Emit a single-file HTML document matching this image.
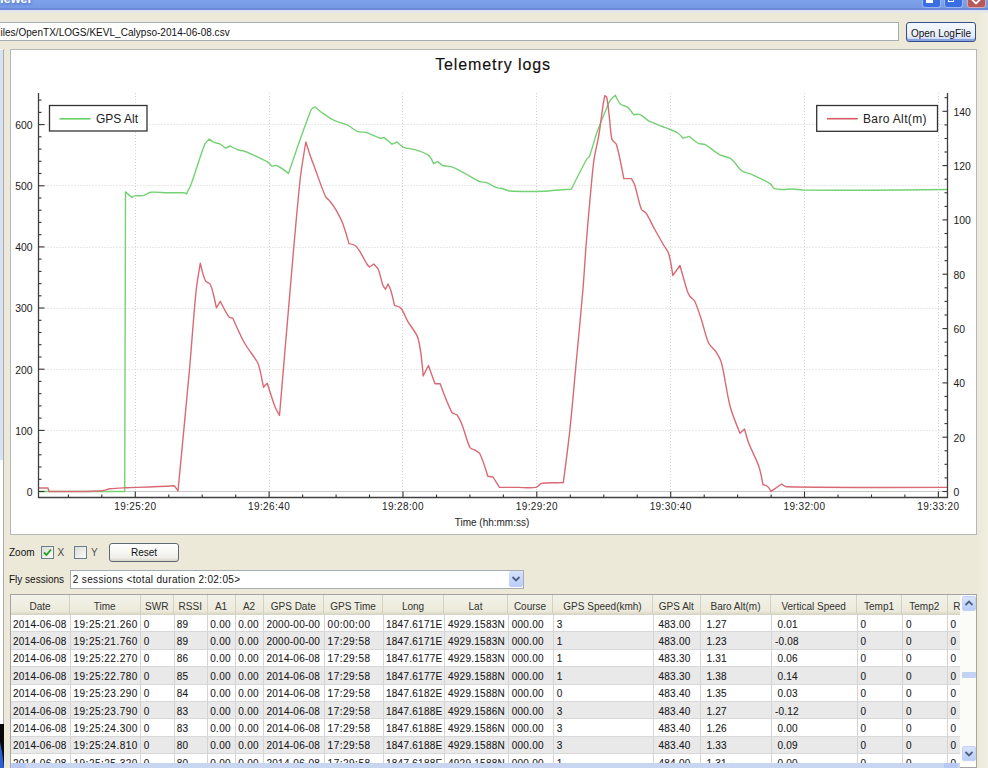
<!DOCTYPE html>
<html><head><meta charset="utf-8"><style>
*{margin:0;padding:0;box-sizing:border-box}
html,body{width:988px;height:768px;overflow:hidden;background:#ece9d8;font-family:"Liberation Sans",sans-serif;color:#111}
svg text{font-family:"Liberation Sans",sans-serif}
.abs{position:absolute}
#title{left:0;top:0;width:988px;height:10px;background:linear-gradient(#7ea2ea,#7497e3);}
#titleline{left:0;top:8px;width:988px;height:2px;background:#6b88d6}
#titlelite{left:0;top:10px;width:988px;height:3px;background:linear-gradient(#dfe3f4,#e9e8e6)}
#path{left:-3px;top:22px;width:902px;height:19px;background:#fff;border:1px solid #a5acb2;font-size:10px;line-height:17px;padding-top:1.2px;padding-left:2.5px;letter-spacing:0.03px;white-space:nowrap}
#openbtn{left:906px;top:22px;width:70px;height:20px;border:1.3px solid #34508c;border-radius:3px;background:linear-gradient(#f4f7ff,#e9eefb 70%,#c3d0f2);font-size:10px;line-height:18px;padding-top:1.5px;text-align:center;box-shadow:inset 0 -2px 0 #8aa2e0}
#chartp{left:10px;top:49px;width:967px;height:486px;background:#fff;border:1px solid #b4b8bd}
#leftstrip{left:-1px;top:49px;width:5px;height:676px;background:#fff;border-right:1px solid #a8adb3}
#leftblue{left:0;top:50px;width:3px;height:410px;background:#d9e2f2}
#blk{left:0;top:724px;width:4px;height:44px;background:#080808}
#zoomlbl{left:9px;top:546px;font-size:10px;line-height:14px}
.cb{position:absolute;width:13px;height:13px;border:1.3px solid #6a7e92;background:linear-gradient(135deg,#dcdcd7,#fbfbf8)}
#reset{left:109px;top:542.5px;width:70px;height:19.5px;border:1.3px solid #5d6a76;border-radius:3px;background:linear-gradient(#fff,#f0f0ea 80%,#d8d4c6);font-size:10px;line-height:17px;text-align:center}
#flylbl{left:9px;top:573px;font-size:10px;line-height:14px}
#combo{left:69.8px;top:569.5px;width:454px;height:19px;background:#fff;border:1px solid #a5acb2;font-size:10px;line-height:17px;padding-left:2px;letter-spacing:0.34px;white-space:nowrap}
#combobtn{left:509px;top:571px;width:14px;height:16px;background:linear-gradient(#d6e2fb,#b8cdf8);border-radius:2px}
#table{left:10px;top:594px;width:967px;height:174px;background:#fff;border:1px solid #a4a4a4}
.hd{position:absolute;top:595px;height:20px;padding-top:3.2px;background:linear-gradient(#f3f2ea,#ebeadb 80%,#d6d2c2);border-right:1px solid #d6d2c2;font-size:10px;line-height:18px;text-align:center;color:#333;white-space:nowrap;overflow:hidden}
.row{position:absolute;left:11px;width:949px;height:17.4px}
.cell{position:absolute;height:17.4px;font-size:10px;line-height:17.4px;padding-top:0.7px;white-space:nowrap;overflow:hidden;color:#1a1a1a;letter-spacing:0.25px;-webkit-text-stroke:0.1px #1a1a1a}
.vl{position:absolute;top:614px;width:1px;height:150px;background:#d4d4d4}
.hl{position:absolute;left:11px;width:949px;height:1px;background:#d8d8d8}
#vscroll{left:960px;top:595px;width:16px;height:168px;background:#fbfbf8}
.sbtn{position:absolute;width:14px;height:15px;background:linear-gradient(#d9e4fb,#b9cdf6);border-radius:2px;border:1px solid #c3d3f5}
#hscroll{left:11px;top:763px;width:949px;height:5px;background:#c9d6f2}
#rightstrip{left:977px;top:13px;width:11px;height:757px;background:linear-gradient(90deg,#ece9d8,#f1efe4)}
</style></head><body>
<div class="abs" id="title"></div>
<div class="abs" id="titleline"></div>
<div class="abs" id="titlelite"></div>
<div class="abs" style="left:0;top:-8px;font-size:13px;font-weight:bold;color:#fff;line-height:13px;letter-spacing:-0.2px;text-shadow:1px 2px 2px #5b7fd6">iewer</div>
<div class="abs" style="left:922px;top:0;width:19px;height:7.5px;background:#3b6ee0;border:1px solid #9bb6f0;border-top:none;border-radius:0 0 3px 3px"></div>
<div class="abs" style="left:926px;top:0;width:7px;height:3px;background:#fff"></div>
<div class="abs" style="left:944px;top:0;width:19px;height:7.5px;background:#3b6ee0;border:1px solid #9bb6f0;border-top:none;border-radius:0 0 3px 3px"></div>
<div class="abs" style="left:948px;top:-2px;width:6px;height:4px;border:1px solid #fff;border-top:none"></div>
<div class="abs" style="left:966.5px;top:0;width:19px;height:7.5px;background:#b9585a;border:1px solid #d9a7b0;border-top:none;border-radius:0 0 3px 3px"></div>
<svg class="abs" style="left:966px;top:0" width="20" height="8"><path d="M4 -2.5 L10 3.5 L16 -2.5" stroke="#fff" stroke-width="1.8" fill="none"/></svg>
<div class="abs" id="path">iles/OpenTX/LOGS/KEVL_Calypso-2014-06-08.csv</div>
<div class="abs" id="openbtn">Open LogFile</div>
<div class="abs" id="leftstrip"></div>
<div class="abs" id="leftblue"></div>
<div class="abs" id="blk"></div>
<svg class="abs" style="left:0;top:724px" width="4" height="44"><path d="M0 18 Q3 30 4 44 L0 44 Z" fill="#2c5fd0"/></svg>
<div class="abs" id="chartp"></div>
<svg width="988" height="768" style="position:absolute;left:0;top:0">
<line x1="135.5" y1="93" x2="135.5" y2="497.5" stroke="#d2d2d2" stroke-width="1" stroke-dasharray="1 2"/>
<line x1="269.5" y1="93" x2="269.5" y2="497.5" stroke="#d2d2d2" stroke-width="1" stroke-dasharray="1 2"/>
<line x1="402.5" y1="93" x2="402.5" y2="497.5" stroke="#d2d2d2" stroke-width="1" stroke-dasharray="1 2"/>
<line x1="536.5" y1="93" x2="536.5" y2="497.5" stroke="#d2d2d2" stroke-width="1" stroke-dasharray="1 2"/>
<line x1="670.5" y1="93" x2="670.5" y2="497.5" stroke="#d2d2d2" stroke-width="1" stroke-dasharray="1 2"/>
<line x1="804.5" y1="93" x2="804.5" y2="497.5" stroke="#d2d2d2" stroke-width="1" stroke-dasharray="1 2"/>
<line x1="938.5" y1="93" x2="938.5" y2="497.5" stroke="#d2d2d2" stroke-width="1" stroke-dasharray="1 2"/>
<line x1="38.5" y1="430.5" x2="947.5" y2="430.5" stroke="#d2d2d2" stroke-width="1" stroke-dasharray="1 2"/>
<line x1="38.5" y1="369.5" x2="947.5" y2="369.5" stroke="#d2d2d2" stroke-width="1" stroke-dasharray="1 2"/>
<line x1="38.5" y1="308.5" x2="947.5" y2="308.5" stroke="#d2d2d2" stroke-width="1" stroke-dasharray="1 2"/>
<line x1="38.5" y1="247.5" x2="947.5" y2="247.5" stroke="#d2d2d2" stroke-width="1" stroke-dasharray="1 2"/>
<line x1="38.5" y1="185.5" x2="947.5" y2="185.5" stroke="#d2d2d2" stroke-width="1" stroke-dasharray="1 2"/>
<line x1="38.5" y1="124.5" x2="947.5" y2="124.5" stroke="#d2d2d2" stroke-width="1" stroke-dasharray="1 2"/>
<line x1="38.5" y1="491.5" x2="947.5" y2="491.5" stroke="#c8c8c8" stroke-width="1"/>
<path d="M38.0 491.5 C38.0 491.5 124.7 491.5 124.7 491.5 C124.7 491.5 125.5 191.9 125.5 191.9 C125.5 191.9 131.8 197.4 131.8 197.4 C131.8 197.4 133.7 196.1 134.6 195.9 C137.0 195.5 140.4 196.1 142.8 195.6 C145.4 195.0 148.4 192.6 151.0 192.3 C155.9 191.7 162.5 192.7 167.4 192.8 C172.3 192.9 178.9 192.6 183.8 192.8 C184.7 192.8 186.5 193.8 186.5 193.8 C186.5 193.8 189.9 187.5 191.0 184.6 C195.4 172.7 200.0 156.4 204.7 144.6 C205.5 142.6 209.2 139.1 209.2 139.1 C209.2 139.1 212.9 141.9 214.7 142.7 C216.0 143.3 218.0 143.1 219.3 143.7 C221.4 144.7 225.6 148.2 225.6 148.2 C225.6 148.2 230.2 146.0 230.2 146.0 C230.2 146.0 235.8 149.1 238.4 150.0 C239.9 150.6 242.3 150.4 243.8 151.0 C248.3 152.6 254.1 155.3 258.4 157.3 C261.2 158.6 265.0 160.2 267.5 161.9 C269.1 163.0 272.0 166.4 272.0 166.4 C272.0 166.4 275.3 165.0 276.6 165.5 C280.5 167.2 288.5 173.4 288.5 173.4 C288.5 173.4 303.7 128.4 311.2 109.5 C311.8 108.2 315.2 106.9 315.2 106.9 C315.2 106.9 320.5 111.6 323.0 113.4 C326.4 115.8 331.0 118.9 334.7 120.7 C338.4 122.5 344.0 123.4 347.7 125.2 C351.0 126.8 354.6 130.4 358.0 131.7 C360.2 132.6 363.7 131.7 366.0 132.4 C370.4 133.7 375.8 137.0 380.3 138.2 C381.4 138.5 384.0 137.4 384.0 137.4 C384.0 137.4 392.0 144.2 392.0 144.2 C392.0 144.2 397.2 142.0 397.2 142.0 C397.2 142.0 401.4 146.3 403.7 147.3 C406.6 148.6 411.0 148.5 414.0 149.4 C418.4 150.8 424.6 152.4 428.4 155.1 C430.8 156.9 433.6 163.7 433.6 163.7 C433.6 163.7 437.6 161.6 437.6 161.6 C437.6 161.6 441.0 164.8 442.8 165.5 C445.4 166.4 449.3 165.9 451.9 166.8 C456.0 168.3 461.1 171.3 464.9 173.3 C469.5 175.7 475.2 179.6 479.9 181.7 C481.5 182.4 484.1 181.8 485.8 182.4 C489.5 183.7 493.9 186.5 497.6 187.9 C498.7 188.3 500.4 188.0 501.6 188.3 C504.0 188.9 507.0 190.8 509.5 191.0 C519.7 191.7 533.4 191.5 543.7 191.3 C546.9 191.3 551.1 190.5 554.3 190.3 C559.4 189.9 571.3 189.2 571.3 189.2 C571.3 189.2 581.9 167.9 586.8 159.0 C587.3 158.0 589.0 157.4 589.4 156.4 C592.2 149.1 594.6 139.0 597.2 131.7 C599.3 125.7 602.6 117.9 605.0 112.1 C606.5 108.6 608.2 103.7 610.2 100.4 C611.4 98.5 615.4 95.2 615.4 95.2 C615.4 95.2 618.4 102.1 620.6 104.3 C622.1 105.8 625.5 105.6 627.1 106.9 C629.5 108.8 633.6 114.7 633.6 114.7 C633.6 114.7 638.4 113.9 640.2 114.7 C643.3 116.0 646.3 119.7 649.3 121.2 C653.0 123.2 658.4 124.9 662.3 126.5 C664.6 127.4 667.7 128.5 670.0 129.5 C672.4 130.5 675.7 131.6 677.8 133.0 C679.6 134.2 683.0 138.2 683.0 138.2 C683.0 138.2 689.5 136.4 689.5 136.4 C689.5 136.4 695.6 141.8 698.6 143.4 C700.4 144.3 703.4 143.7 705.2 144.7 C709.8 147.2 714.9 152.1 719.5 154.6 C722.4 156.2 726.9 156.7 729.9 158.2 C731.3 158.9 732.7 160.5 733.8 161.6 C736.3 164.2 738.7 168.6 741.6 170.7 C744.3 172.6 749.0 173.2 752.0 174.6 C757.6 177.1 765.1 180.5 770.3 183.8 C771.8 184.7 772.6 187.6 774.2 188.4 C776.3 189.4 779.6 189.4 782.0 189.5 C785.1 189.6 789.3 188.9 792.4 189.0 C795.5 189.1 799.7 189.9 802.8 190.0 C823.0 190.3 849.8 190.4 870.0 190.3 C893.1 190.2 947.0 189.5 947.0 189.5" fill="none" stroke="#74d274" stroke-width="1.4" stroke-linejoin="round"/>
<path d="M38.0 488.0 C38.0 488.0 48.0 488.0 48.0 488.0 C48.0 488.0 49.0 491.5 49.0 491.5 C49.0 491.5 84.7 491.7 100.0 491.0 C103.2 490.9 107.2 489.2 110.4 488.8 C114.8 488.2 120.6 488.0 125.0 487.8 C132.3 487.5 142.2 487.3 149.5 487.0 C156.9 486.7 174.2 485.7 174.2 485.7 C174.2 485.7 178.0 490.9 178.0 490.9 C178.0 490.9 186.1 406.6 189.4 370.5 C191.5 347.0 193.6 315.5 196.0 292.0 C196.9 283.3 200.3 263.2 200.3 263.2 C200.3 263.2 203.1 276.0 205.5 281.0 C206.2 282.5 209.2 282.6 210.0 284.0 C211.6 286.7 212.5 290.9 213.3 294.0 C214.4 298.1 216.4 307.8 216.4 307.8 C216.4 307.8 220.3 301.3 220.3 301.3 C220.3 301.3 225.7 312.6 228.9 316.9 C229.6 317.9 232.8 318.2 232.8 318.2 C232.8 318.2 240.5 335.8 244.5 343.0 C247.9 349.1 254.1 356.4 257.6 362.5 C258.8 364.6 259.4 367.9 260.0 370.3 C261.2 375.3 263.5 387.2 263.5 387.2 C263.5 387.2 267.2 383.3 267.2 383.3 C267.2 383.3 269.6 390.6 270.6 393.8 C271.9 397.7 273.4 403.0 275.0 406.8 C276.1 409.5 279.5 415.4 279.5 415.4 C279.5 415.4 285.8 340.2 288.6 308.0 C291.9 269.8 296.0 218.8 300.0 180.7 C301.2 169.0 305.9 142.0 305.9 142.0 C305.9 142.0 308.7 151.1 310.0 155.0 C311.1 158.2 312.7 162.4 313.9 165.5 C317.4 174.9 321.5 187.6 325.6 196.8 C326.3 198.3 328.5 199.4 329.5 200.7 C331.6 203.3 334.3 206.9 336.0 209.8 C338.2 213.6 340.9 218.7 342.5 222.8 C344.8 228.9 349.0 243.6 349.0 243.6 C349.0 243.6 353.9 244.4 355.5 245.7 C357.6 247.3 359.3 250.6 360.7 252.8 C362.8 256.2 365.0 261.1 367.2 264.5 C367.8 265.4 369.8 267.0 369.8 267.0 C369.8 267.0 373.8 264.0 373.8 264.0 C373.8 264.0 377.5 267.7 378.4 269.7 C380.3 274.2 381.2 280.7 382.9 285.3 C383.4 286.6 385.5 289.2 385.5 289.2 C385.5 289.2 388.0 284.0 388.0 284.0 C388.0 284.0 390.1 288.1 390.7 290.0 C392.1 294.6 394.6 305.6 394.6 305.6 C394.6 305.6 399.7 306.6 401.0 308.2 C403.8 311.6 405.4 317.4 407.6 321.2 C410.5 326.4 416.4 332.5 418.0 338.2 C421.1 349.2 423.2 376.0 423.2 376.0 C423.2 376.0 428.4 365.5 428.4 365.5 C428.4 365.5 435.0 383.8 435.0 383.8 C435.0 383.8 440.2 383.8 440.2 383.8 C440.2 383.8 447.5 404.2 451.9 412.4 C452.7 413.9 455.9 413.7 457.0 415.0 C459.2 417.7 461.0 422.1 462.3 425.4 C464.9 431.9 466.7 441.3 470.0 447.5 C470.8 449.1 473.8 449.2 475.3 450.2 C476.8 451.2 479.2 452.4 480.0 454.0 C483.1 460.4 487.8 476.2 487.8 476.2 C487.8 476.2 493.0 477.0 493.0 477.0 C493.0 477.0 499.5 487.4 499.5 487.4 C499.5 487.4 512.5 487.4 518.0 487.4 C523.4 487.4 530.7 488.3 536.0 487.4 C537.9 487.1 539.3 483.9 541.2 483.5 C546.2 482.4 553.0 482.9 558.1 482.7 C559.7 482.6 563.3 482.7 563.3 482.7 C563.3 482.7 568.1 446.3 569.8 430.6 C572.1 409.5 574.4 381.4 576.4 360.3 C578.4 339.2 581.1 311.1 582.9 290.0 C584.0 276.9 585.0 259.4 586.0 246.2 C587.1 232.2 588.7 213.4 590.0 199.4 C591.1 187.7 592.3 172.0 593.9 160.3 C595.0 152.4 597.7 142.1 599.0 134.3 C600.4 125.7 601.7 114.2 603.0 105.6 C603.4 102.6 604.8 95.7 604.8 95.7 C604.8 95.7 606.7 96.9 606.9 97.8 C608.2 104.0 608.7 112.4 609.5 118.6 C610.3 124.9 610.4 133.4 612.0 139.5 C612.5 141.4 615.8 142.6 616.4 144.5 C619.4 154.5 623.8 178.6 623.8 178.6 C623.8 178.6 631.5 178.6 631.5 178.6 C631.5 178.6 634.1 183.1 634.8 185.2 C637.1 192.4 638.7 202.5 641.5 209.5 C642.1 211.0 645.0 211.5 645.9 212.9 C649.0 217.6 652.1 224.6 654.8 229.5 C657.4 234.2 660.9 240.4 663.6 245.0 C665.1 247.7 667.9 251.0 668.8 254.0 C670.7 260.3 672.8 275.5 672.8 275.5 C672.8 275.5 680.0 265.5 680.0 265.5 C680.0 265.5 684.9 283.4 687.3 291.0 C687.9 292.7 688.9 295.0 690.0 296.5 C691.1 298.1 693.8 299.3 694.6 301.0 C697.3 306.4 699.6 314.2 701.5 320.0 C703.8 326.9 705.6 336.4 708.6 343.0 C710.0 346.1 714.0 348.8 715.8 351.6 C717.9 354.8 720.5 359.3 721.5 363.0 C724.8 375.7 726.7 393.3 730.0 406.0 C732.2 414.4 740.0 433.3 740.0 433.3 C740.0 433.3 744.5 429.0 744.5 429.0 C744.5 429.0 747.2 439.1 748.8 443.3 C751.5 450.3 756.4 459.2 758.8 466.3 C760.6 471.7 763.0 484.8 763.0 484.8 C763.0 484.8 766.3 485.3 767.4 486.2 C768.9 487.4 771.0 491.4 771.0 491.4 C771.0 491.4 781.7 484.0 781.7 484.0 C781.7 484.0 784.9 486.8 786.6 486.8 C834.7 487.8 947.0 487.4 947.0 487.4" fill="none" stroke="#d96a74" stroke-width="1.4" stroke-linejoin="round"/>
<path d="M38.5 93 V497.5 H947.5 V93" fill="none" stroke="#404040" stroke-width="1.3"/>
<line x1="38.5" y1="491.5" x2="44.5" y2="491.5" stroke="#333" stroke-width="1.1"/>
<text x="32.5" y="495.9" text-anchor="end" font-size="10.4" fill="#1a1a1a">0</text>
<line x1="38.5" y1="479.3" x2="41.5" y2="479.3" stroke="#333" stroke-width="1.1"/>
<line x1="38.5" y1="467.0" x2="41.5" y2="467.0" stroke="#333" stroke-width="1.1"/>
<line x1="38.5" y1="454.8" x2="41.5" y2="454.8" stroke="#333" stroke-width="1.1"/>
<line x1="38.5" y1="442.6" x2="41.5" y2="442.6" stroke="#333" stroke-width="1.1"/>
<line x1="38.5" y1="430.4" x2="44.5" y2="430.4" stroke="#333" stroke-width="1.1"/>
<text x="32.5" y="434.8" text-anchor="end" font-size="10.4" fill="#1a1a1a">100</text>
<line x1="38.5" y1="418.1" x2="41.5" y2="418.1" stroke="#333" stroke-width="1.1"/>
<line x1="38.5" y1="405.9" x2="41.5" y2="405.9" stroke="#333" stroke-width="1.1"/>
<line x1="38.5" y1="393.7" x2="41.5" y2="393.7" stroke="#333" stroke-width="1.1"/>
<line x1="38.5" y1="381.4" x2="41.5" y2="381.4" stroke="#333" stroke-width="1.1"/>
<line x1="38.5" y1="369.2" x2="44.5" y2="369.2" stroke="#333" stroke-width="1.1"/>
<text x="32.5" y="373.6" text-anchor="end" font-size="10.4" fill="#1a1a1a">200</text>
<line x1="38.5" y1="357.0" x2="41.5" y2="357.0" stroke="#333" stroke-width="1.1"/>
<line x1="38.5" y1="344.7" x2="41.5" y2="344.7" stroke="#333" stroke-width="1.1"/>
<line x1="38.5" y1="332.5" x2="41.5" y2="332.5" stroke="#333" stroke-width="1.1"/>
<line x1="38.5" y1="320.3" x2="41.5" y2="320.3" stroke="#333" stroke-width="1.1"/>
<line x1="38.5" y1="308.0" x2="44.5" y2="308.0" stroke="#333" stroke-width="1.1"/>
<text x="32.5" y="312.4" text-anchor="end" font-size="10.4" fill="#1a1a1a">300</text>
<line x1="38.5" y1="295.8" x2="41.5" y2="295.8" stroke="#333" stroke-width="1.1"/>
<line x1="38.5" y1="283.6" x2="41.5" y2="283.6" stroke="#333" stroke-width="1.1"/>
<line x1="38.5" y1="271.4" x2="41.5" y2="271.4" stroke="#333" stroke-width="1.1"/>
<line x1="38.5" y1="259.1" x2="41.5" y2="259.1" stroke="#333" stroke-width="1.1"/>
<line x1="38.5" y1="246.9" x2="44.5" y2="246.9" stroke="#333" stroke-width="1.1"/>
<text x="32.5" y="251.3" text-anchor="end" font-size="10.4" fill="#1a1a1a">400</text>
<line x1="38.5" y1="234.7" x2="41.5" y2="234.7" stroke="#333" stroke-width="1.1"/>
<line x1="38.5" y1="222.4" x2="41.5" y2="222.4" stroke="#333" stroke-width="1.1"/>
<line x1="38.5" y1="210.2" x2="41.5" y2="210.2" stroke="#333" stroke-width="1.1"/>
<line x1="38.5" y1="198.0" x2="41.5" y2="198.0" stroke="#333" stroke-width="1.1"/>
<line x1="38.5" y1="185.8" x2="44.5" y2="185.8" stroke="#333" stroke-width="1.1"/>
<text x="32.5" y="190.2" text-anchor="end" font-size="10.4" fill="#1a1a1a">500</text>
<line x1="38.5" y1="173.5" x2="41.5" y2="173.5" stroke="#333" stroke-width="1.1"/>
<line x1="38.5" y1="161.3" x2="41.5" y2="161.3" stroke="#333" stroke-width="1.1"/>
<line x1="38.5" y1="149.1" x2="41.5" y2="149.1" stroke="#333" stroke-width="1.1"/>
<line x1="38.5" y1="136.8" x2="41.5" y2="136.8" stroke="#333" stroke-width="1.1"/>
<line x1="38.5" y1="124.6" x2="44.5" y2="124.6" stroke="#333" stroke-width="1.1"/>
<text x="32.5" y="129.0" text-anchor="end" font-size="10.4" fill="#1a1a1a">600</text>
<line x1="38.5" y1="112.4" x2="41.5" y2="112.4" stroke="#333" stroke-width="1.1"/>
<line x1="38.5" y1="100.1" x2="41.5" y2="100.1" stroke="#333" stroke-width="1.1"/>
<line x1="942.5" y1="491.5" x2="947.5" y2="491.5" stroke="#333" stroke-width="1.1"/>
<text x="953.5" y="495.9" font-size="10.4" fill="#1a1a1a">0</text>
<line x1="944.5" y1="477.9" x2="947.5" y2="477.9" stroke="#333" stroke-width="1.1"/>
<line x1="944.5" y1="464.3" x2="947.5" y2="464.3" stroke="#333" stroke-width="1.1"/>
<line x1="944.5" y1="450.8" x2="947.5" y2="450.8" stroke="#333" stroke-width="1.1"/>
<line x1="942.5" y1="437.2" x2="947.5" y2="437.2" stroke="#333" stroke-width="1.1"/>
<text x="953.5" y="441.6" font-size="10.4" fill="#1a1a1a">20</text>
<line x1="944.5" y1="423.6" x2="947.5" y2="423.6" stroke="#333" stroke-width="1.1"/>
<line x1="944.5" y1="410.0" x2="947.5" y2="410.0" stroke="#333" stroke-width="1.1"/>
<line x1="944.5" y1="396.4" x2="947.5" y2="396.4" stroke="#333" stroke-width="1.1"/>
<line x1="942.5" y1="382.9" x2="947.5" y2="382.9" stroke="#333" stroke-width="1.1"/>
<text x="953.5" y="387.3" font-size="10.4" fill="#1a1a1a">40</text>
<line x1="944.5" y1="369.3" x2="947.5" y2="369.3" stroke="#333" stroke-width="1.1"/>
<line x1="944.5" y1="355.7" x2="947.5" y2="355.7" stroke="#333" stroke-width="1.1"/>
<line x1="944.5" y1="342.1" x2="947.5" y2="342.1" stroke="#333" stroke-width="1.1"/>
<line x1="942.5" y1="328.6" x2="947.5" y2="328.6" stroke="#333" stroke-width="1.1"/>
<text x="953.5" y="333.0" font-size="10.4" fill="#1a1a1a">60</text>
<line x1="944.5" y1="315.0" x2="947.5" y2="315.0" stroke="#333" stroke-width="1.1"/>
<line x1="944.5" y1="301.4" x2="947.5" y2="301.4" stroke="#333" stroke-width="1.1"/>
<line x1="944.5" y1="287.8" x2="947.5" y2="287.8" stroke="#333" stroke-width="1.1"/>
<line x1="942.5" y1="274.2" x2="947.5" y2="274.2" stroke="#333" stroke-width="1.1"/>
<text x="953.5" y="278.6" font-size="10.4" fill="#1a1a1a">80</text>
<line x1="944.5" y1="260.7" x2="947.5" y2="260.7" stroke="#333" stroke-width="1.1"/>
<line x1="944.5" y1="247.1" x2="947.5" y2="247.1" stroke="#333" stroke-width="1.1"/>
<line x1="944.5" y1="233.5" x2="947.5" y2="233.5" stroke="#333" stroke-width="1.1"/>
<line x1="942.5" y1="219.9" x2="947.5" y2="219.9" stroke="#333" stroke-width="1.1"/>
<text x="953.5" y="224.3" font-size="10.4" fill="#1a1a1a">100</text>
<line x1="944.5" y1="206.4" x2="947.5" y2="206.4" stroke="#333" stroke-width="1.1"/>
<line x1="944.5" y1="192.8" x2="947.5" y2="192.8" stroke="#333" stroke-width="1.1"/>
<line x1="944.5" y1="179.2" x2="947.5" y2="179.2" stroke="#333" stroke-width="1.1"/>
<line x1="942.5" y1="165.6" x2="947.5" y2="165.6" stroke="#333" stroke-width="1.1"/>
<text x="953.5" y="170.0" font-size="10.4" fill="#1a1a1a">120</text>
<line x1="944.5" y1="152.0" x2="947.5" y2="152.0" stroke="#333" stroke-width="1.1"/>
<line x1="944.5" y1="138.5" x2="947.5" y2="138.5" stroke="#333" stroke-width="1.1"/>
<line x1="944.5" y1="124.9" x2="947.5" y2="124.9" stroke="#333" stroke-width="1.1"/>
<line x1="942.5" y1="111.3" x2="947.5" y2="111.3" stroke="#333" stroke-width="1.1"/>
<text x="953.5" y="115.7" font-size="10.4" fill="#1a1a1a">140</text>
<line x1="944.5" y1="97.7" x2="947.5" y2="97.7" stroke="#333" stroke-width="1.1"/>
<line x1="68.4" y1="497.5" x2="68.4" y2="494.5" stroke="#333" stroke-width="1.1"/>
<line x1="101.8" y1="497.5" x2="101.8" y2="494.5" stroke="#333" stroke-width="1.1"/>
<line x1="135.3" y1="497.5" x2="135.3" y2="491.5" stroke="#333" stroke-width="1.1"/>
<line x1="168.8" y1="497.5" x2="168.8" y2="494.5" stroke="#333" stroke-width="1.1"/>
<line x1="202.2" y1="497.5" x2="202.2" y2="494.5" stroke="#333" stroke-width="1.1"/>
<line x1="235.7" y1="497.5" x2="235.7" y2="494.5" stroke="#333" stroke-width="1.1"/>
<line x1="269.1" y1="497.5" x2="269.1" y2="491.5" stroke="#333" stroke-width="1.1"/>
<line x1="302.6" y1="497.5" x2="302.6" y2="494.5" stroke="#333" stroke-width="1.1"/>
<line x1="336.1" y1="497.5" x2="336.1" y2="494.5" stroke="#333" stroke-width="1.1"/>
<line x1="369.5" y1="497.5" x2="369.5" y2="494.5" stroke="#333" stroke-width="1.1"/>
<line x1="403.0" y1="497.5" x2="403.0" y2="491.5" stroke="#333" stroke-width="1.1"/>
<line x1="436.5" y1="497.5" x2="436.5" y2="494.5" stroke="#333" stroke-width="1.1"/>
<line x1="469.9" y1="497.5" x2="469.9" y2="494.5" stroke="#333" stroke-width="1.1"/>
<line x1="503.4" y1="497.5" x2="503.4" y2="494.5" stroke="#333" stroke-width="1.1"/>
<line x1="536.8" y1="497.5" x2="536.8" y2="491.5" stroke="#333" stroke-width="1.1"/>
<line x1="570.3" y1="497.5" x2="570.3" y2="494.5" stroke="#333" stroke-width="1.1"/>
<line x1="603.8" y1="497.5" x2="603.8" y2="494.5" stroke="#333" stroke-width="1.1"/>
<line x1="637.2" y1="497.5" x2="637.2" y2="494.5" stroke="#333" stroke-width="1.1"/>
<line x1="670.7" y1="497.5" x2="670.7" y2="491.5" stroke="#333" stroke-width="1.1"/>
<line x1="704.2" y1="497.5" x2="704.2" y2="494.5" stroke="#333" stroke-width="1.1"/>
<line x1="737.6" y1="497.5" x2="737.6" y2="494.5" stroke="#333" stroke-width="1.1"/>
<line x1="771.1" y1="497.5" x2="771.1" y2="494.5" stroke="#333" stroke-width="1.1"/>
<line x1="804.5" y1="497.5" x2="804.5" y2="491.5" stroke="#333" stroke-width="1.1"/>
<line x1="838.0" y1="497.5" x2="838.0" y2="494.5" stroke="#333" stroke-width="1.1"/>
<line x1="871.5" y1="497.5" x2="871.5" y2="494.5" stroke="#333" stroke-width="1.1"/>
<line x1="904.9" y1="497.5" x2="904.9" y2="494.5" stroke="#333" stroke-width="1.1"/>
<line x1="938.4" y1="497.5" x2="938.4" y2="491.5" stroke="#333" stroke-width="1.1"/>
<text x="135.3" y="510" text-anchor="middle" font-size="10" letter-spacing="0.4" fill="#222">19:25:20</text>
<text x="269.1" y="510" text-anchor="middle" font-size="10" letter-spacing="0.4" fill="#222">19:26:40</text>
<text x="403.0" y="510" text-anchor="middle" font-size="10" letter-spacing="0.4" fill="#222">19:28:00</text>
<text x="536.8" y="510" text-anchor="middle" font-size="10" letter-spacing="0.4" fill="#222">19:29:20</text>
<text x="670.7" y="510" text-anchor="middle" font-size="10" letter-spacing="0.4" fill="#222">19:30:40</text>
<text x="804.5" y="510" text-anchor="middle" font-size="10" letter-spacing="0.4" fill="#222">19:32:00</text>
<text x="938.4" y="510" text-anchor="middle" font-size="10" letter-spacing="0.4" fill="#222">19:33:20</text>
<text x="492" y="526" text-anchor="middle" font-size="10" fill="#222">Time (hh:mm:ss)</text>
<text x="493" y="70.2" text-anchor="middle" font-size="16" letter-spacing="0.9" fill="#111" stroke="#111" stroke-width="0.15">Telemetry logs</text>
<rect x="49.5" y="105.5" width="97.5" height="25.5" fill="#fff" stroke="#333" stroke-width="1.3"/>
<line x1="59.5" y1="118.8" x2="90.5" y2="118.8" stroke="#66d166" stroke-width="1.6"/>
<text x="96" y="122.7" font-size="12" fill="#222">GPS Alt</text>
<rect x="816.7" y="105.5" width="120.8" height="25.8" fill="#fff" stroke="#333" stroke-width="1.3"/>
<line x1="827" y1="118.7" x2="857.7" y2="118.7" stroke="#d45a64" stroke-width="1.6"/>
<text x="863" y="122.7" font-size="12" letter-spacing="0.35" fill="#222">Baro Alt(m)</text>
</svg>
<div class="abs" id="zoomlbl">Zoom</div>
<div class="cb" style="left:40.5px;top:546px"></div>
<svg class="abs" style="left:40.5px;top:546px" width="13" height="13"><path d="M3 6.5 L5.5 9 L10 3.5" fill="none" stroke="#21a121" stroke-width="1.8"/></svg>
<div class="abs" style="left:57.5px;top:546px;font-size:10px;line-height:14px;color:#444">X</div>
<div class="cb" style="left:74px;top:546px"></div>
<div class="abs" style="left:91px;top:546px;font-size:10px;line-height:14px;color:#555">Y</div>
<div class="abs" id="reset">Reset</div>
<div class="abs" id="flylbl">Fly sessions</div>
<div class="abs" id="combo">2 sessions &lt;total duration 2:02:05&gt;</div>
<div class="abs" id="combobtn"></div>
<svg class="abs" style="left:509px;top:571px" width="14" height="16"><path d="M3.5 6 L7 9.5 L10.5 6" fill="none" stroke="#4d6185" stroke-width="1.8"/></svg>
<div class="abs" id="table"></div>
<div class="hd" style="left:11.0px;width:59.0px">Date</div>
<div class="hd" style="left:70.0px;width:70.5px">Time</div>
<div class="hd" style="left:140.5px;width:33.5px">SWR</div>
<div class="hd" style="left:174.0px;width:33.5px">RSSI</div>
<div class="hd" style="left:207.5px;width:28.0px">A1</div>
<div class="hd" style="left:235.5px;width:28.0px">A2</div>
<div class="hd" style="left:263.5px;width:60.5px">GPS Date</div>
<div class="hd" style="left:324.0px;width:59.0px">GPS Time</div>
<div class="hd" style="left:383.0px;width:61.0px">Long</div>
<div class="hd" style="left:444.0px;width:64.0px">Lat</div>
<div class="hd" style="left:508.0px;width:45.0px">Course</div>
<div class="hd" style="left:553.0px;width:100.0px">GPS Speed(kmh)</div>
<div class="hd" style="left:653.0px;width:47.6px">GPS Alt</div>
<div class="hd" style="left:700.6px;width:70.8px">Baro Alt(m)</div>
<div class="hd" style="left:771.4px;width:85.6px">Vertical Speed</div>
<div class="hd" style="left:857.0px;width:45.0px">Temp1</div>
<div class="hd" style="left:902.0px;width:45.6px">Temp2</div>
<div class="hd" style="left:947.6px;width:12.4px;text-align:left;padding-left:5.6px;overflow:visible;border-right:none">R</div>
<div class="row" style="top:615.0px;background:#fff"></div>
<div class="cell" style="left:11.0px;top:615.0px;width:59.0px;padding-left:2px">2014-06-08</div>
<div class="cell" style="left:70.0px;top:615.0px;width:70.5px;padding-left:3.5px;letter-spacing:0.5px">19:25:21.260</div>
<div class="cell" style="left:140.5px;top:615.0px;width:33.5px;padding-left:3.3px">0</div>
<div class="cell" style="left:174.0px;top:615.0px;width:33.5px;padding-left:2.8px">89</div>
<div class="cell" style="left:207.5px;top:615.0px;width:28.0px;padding-left:2.8px">0.00</div>
<div class="cell" style="left:235.5px;top:615.0px;width:28.0px;padding-left:2.8px">0.00</div>
<div class="cell" style="left:263.5px;top:615.0px;width:60.5px;padding-left:3px">2000-00-00</div>
<div class="cell" style="left:324.0px;top:615.0px;width:59.0px;padding-left:3.6px;letter-spacing:0.5px">00:00:00</div>
<div class="cell" style="left:383.0px;top:615.0px;width:61.0px;padding-left:3px">1847.6171E</div>
<div class="cell" style="left:444.0px;top:615.0px;width:64.0px;padding-left:4px">4929.1583N</div>
<div class="cell" style="left:508.0px;top:615.0px;width:45.0px;padding-left:3.7px">000.00</div>
<div class="cell" style="left:553.0px;top:615.0px;width:100.0px;padding-left:3.7px">3</div>
<div class="cell" style="left:653.0px;top:615.0px;width:47.6px;padding-left:5.5px">483.00</div>
<div class="cell" style="left:700.6px;top:615.0px;width:70.8px;padding-left:5.8px">1.27</div>
<div class="cell" style="left:771.4px;top:615.0px;width:85.6px;padding-left:6px">0.01</div>
<div class="cell" style="left:857.0px;top:615.0px;width:45.0px;padding-left:3.4px">0</div>
<div class="cell" style="left:902.0px;top:615.0px;width:45.6px;padding-left:4px">0</div>
<div class="cell" style="left:947.6px;top:615.0px;width:12.4px;padding-left:3px">0</div>
<div class="row" style="top:632.4px;background:#e9e9e9"></div>
<div class="cell" style="left:11.0px;top:632.4px;width:59.0px;padding-left:2px">2014-06-08</div>
<div class="cell" style="left:70.0px;top:632.4px;width:70.5px;padding-left:3.5px;letter-spacing:0.5px">19:25:21.760</div>
<div class="cell" style="left:140.5px;top:632.4px;width:33.5px;padding-left:3.3px">0</div>
<div class="cell" style="left:174.0px;top:632.4px;width:33.5px;padding-left:2.8px">89</div>
<div class="cell" style="left:207.5px;top:632.4px;width:28.0px;padding-left:2.8px">0.00</div>
<div class="cell" style="left:235.5px;top:632.4px;width:28.0px;padding-left:2.8px">0.00</div>
<div class="cell" style="left:263.5px;top:632.4px;width:60.5px;padding-left:3px">2000-00-00</div>
<div class="cell" style="left:324.0px;top:632.4px;width:59.0px;padding-left:3.6px;letter-spacing:0.5px">17:29:58</div>
<div class="cell" style="left:383.0px;top:632.4px;width:61.0px;padding-left:3px">1847.6171E</div>
<div class="cell" style="left:444.0px;top:632.4px;width:64.0px;padding-left:4px">4929.1583N</div>
<div class="cell" style="left:508.0px;top:632.4px;width:45.0px;padding-left:3.7px">000.00</div>
<div class="cell" style="left:553.0px;top:632.4px;width:100.0px;padding-left:3.7px">1</div>
<div class="cell" style="left:653.0px;top:632.4px;width:47.6px;padding-left:5.5px">483.00</div>
<div class="cell" style="left:700.6px;top:632.4px;width:70.8px;padding-left:5.8px">1.23</div>
<div class="cell" style="left:771.4px;top:632.4px;width:85.6px;padding-left:3.5px">-0.08</div>
<div class="cell" style="left:857.0px;top:632.4px;width:45.0px;padding-left:3.4px">0</div>
<div class="cell" style="left:902.0px;top:632.4px;width:45.6px;padding-left:4px">0</div>
<div class="cell" style="left:947.6px;top:632.4px;width:12.4px;padding-left:3px">0</div>
<div class="row" style="top:649.8px;background:#fff"></div>
<div class="cell" style="left:11.0px;top:649.8px;width:59.0px;padding-left:2px">2014-06-08</div>
<div class="cell" style="left:70.0px;top:649.8px;width:70.5px;padding-left:3.5px;letter-spacing:0.5px">19:25:22.270</div>
<div class="cell" style="left:140.5px;top:649.8px;width:33.5px;padding-left:3.3px">0</div>
<div class="cell" style="left:174.0px;top:649.8px;width:33.5px;padding-left:2.8px">86</div>
<div class="cell" style="left:207.5px;top:649.8px;width:28.0px;padding-left:2.8px">0.00</div>
<div class="cell" style="left:235.5px;top:649.8px;width:28.0px;padding-left:2.8px">0.00</div>
<div class="cell" style="left:263.5px;top:649.8px;width:60.5px;padding-left:3px">2014-06-08</div>
<div class="cell" style="left:324.0px;top:649.8px;width:59.0px;padding-left:3.6px;letter-spacing:0.5px">17:29:58</div>
<div class="cell" style="left:383.0px;top:649.8px;width:61.0px;padding-left:3px">1847.6177E</div>
<div class="cell" style="left:444.0px;top:649.8px;width:64.0px;padding-left:4px">4929.1583N</div>
<div class="cell" style="left:508.0px;top:649.8px;width:45.0px;padding-left:3.7px">000.00</div>
<div class="cell" style="left:553.0px;top:649.8px;width:100.0px;padding-left:3.7px">1</div>
<div class="cell" style="left:653.0px;top:649.8px;width:47.6px;padding-left:5.5px">483.30</div>
<div class="cell" style="left:700.6px;top:649.8px;width:70.8px;padding-left:5.8px">1.31</div>
<div class="cell" style="left:771.4px;top:649.8px;width:85.6px;padding-left:6px">0.06</div>
<div class="cell" style="left:857.0px;top:649.8px;width:45.0px;padding-left:3.4px">0</div>
<div class="cell" style="left:902.0px;top:649.8px;width:45.6px;padding-left:4px">0</div>
<div class="cell" style="left:947.6px;top:649.8px;width:12.4px;padding-left:3px">0</div>
<div class="row" style="top:667.2px;background:#e9e9e9"></div>
<div class="cell" style="left:11.0px;top:667.2px;width:59.0px;padding-left:2px">2014-06-08</div>
<div class="cell" style="left:70.0px;top:667.2px;width:70.5px;padding-left:3.5px;letter-spacing:0.5px">19:25:22.780</div>
<div class="cell" style="left:140.5px;top:667.2px;width:33.5px;padding-left:3.3px">0</div>
<div class="cell" style="left:174.0px;top:667.2px;width:33.5px;padding-left:2.8px">85</div>
<div class="cell" style="left:207.5px;top:667.2px;width:28.0px;padding-left:2.8px">0.00</div>
<div class="cell" style="left:235.5px;top:667.2px;width:28.0px;padding-left:2.8px">0.00</div>
<div class="cell" style="left:263.5px;top:667.2px;width:60.5px;padding-left:3px">2014-06-08</div>
<div class="cell" style="left:324.0px;top:667.2px;width:59.0px;padding-left:3.6px;letter-spacing:0.5px">17:29:58</div>
<div class="cell" style="left:383.0px;top:667.2px;width:61.0px;padding-left:3px">1847.6177E</div>
<div class="cell" style="left:444.0px;top:667.2px;width:64.0px;padding-left:4px">4929.1588N</div>
<div class="cell" style="left:508.0px;top:667.2px;width:45.0px;padding-left:3.7px">000.00</div>
<div class="cell" style="left:553.0px;top:667.2px;width:100.0px;padding-left:3.7px">1</div>
<div class="cell" style="left:653.0px;top:667.2px;width:47.6px;padding-left:5.5px">483.30</div>
<div class="cell" style="left:700.6px;top:667.2px;width:70.8px;padding-left:5.8px">1.38</div>
<div class="cell" style="left:771.4px;top:667.2px;width:85.6px;padding-left:6px">0.14</div>
<div class="cell" style="left:857.0px;top:667.2px;width:45.0px;padding-left:3.4px">0</div>
<div class="cell" style="left:902.0px;top:667.2px;width:45.6px;padding-left:4px">0</div>
<div class="cell" style="left:947.6px;top:667.2px;width:12.4px;padding-left:3px">0</div>
<div class="row" style="top:684.6px;background:#fff"></div>
<div class="cell" style="left:11.0px;top:684.6px;width:59.0px;padding-left:2px">2014-06-08</div>
<div class="cell" style="left:70.0px;top:684.6px;width:70.5px;padding-left:3.5px;letter-spacing:0.5px">19:25:23.290</div>
<div class="cell" style="left:140.5px;top:684.6px;width:33.5px;padding-left:3.3px">0</div>
<div class="cell" style="left:174.0px;top:684.6px;width:33.5px;padding-left:2.8px">84</div>
<div class="cell" style="left:207.5px;top:684.6px;width:28.0px;padding-left:2.8px">0.00</div>
<div class="cell" style="left:235.5px;top:684.6px;width:28.0px;padding-left:2.8px">0.00</div>
<div class="cell" style="left:263.5px;top:684.6px;width:60.5px;padding-left:3px">2014-06-08</div>
<div class="cell" style="left:324.0px;top:684.6px;width:59.0px;padding-left:3.6px;letter-spacing:0.5px">17:29:58</div>
<div class="cell" style="left:383.0px;top:684.6px;width:61.0px;padding-left:3px">1847.6182E</div>
<div class="cell" style="left:444.0px;top:684.6px;width:64.0px;padding-left:4px">4929.1588N</div>
<div class="cell" style="left:508.0px;top:684.6px;width:45.0px;padding-left:3.7px">000.00</div>
<div class="cell" style="left:553.0px;top:684.6px;width:100.0px;padding-left:3.7px">0</div>
<div class="cell" style="left:653.0px;top:684.6px;width:47.6px;padding-left:5.5px">483.40</div>
<div class="cell" style="left:700.6px;top:684.6px;width:70.8px;padding-left:5.8px">1.35</div>
<div class="cell" style="left:771.4px;top:684.6px;width:85.6px;padding-left:6px">0.03</div>
<div class="cell" style="left:857.0px;top:684.6px;width:45.0px;padding-left:3.4px">0</div>
<div class="cell" style="left:902.0px;top:684.6px;width:45.6px;padding-left:4px">0</div>
<div class="cell" style="left:947.6px;top:684.6px;width:12.4px;padding-left:3px">0</div>
<div class="row" style="top:702.0px;background:#e9e9e9"></div>
<div class="cell" style="left:11.0px;top:702.0px;width:59.0px;padding-left:2px">2014-06-08</div>
<div class="cell" style="left:70.0px;top:702.0px;width:70.5px;padding-left:3.5px;letter-spacing:0.5px">19:25:23.790</div>
<div class="cell" style="left:140.5px;top:702.0px;width:33.5px;padding-left:3.3px">0</div>
<div class="cell" style="left:174.0px;top:702.0px;width:33.5px;padding-left:2.8px">83</div>
<div class="cell" style="left:207.5px;top:702.0px;width:28.0px;padding-left:2.8px">0.00</div>
<div class="cell" style="left:235.5px;top:702.0px;width:28.0px;padding-left:2.8px">0.00</div>
<div class="cell" style="left:263.5px;top:702.0px;width:60.5px;padding-left:3px">2014-06-08</div>
<div class="cell" style="left:324.0px;top:702.0px;width:59.0px;padding-left:3.6px;letter-spacing:0.5px">17:29:58</div>
<div class="cell" style="left:383.0px;top:702.0px;width:61.0px;padding-left:3px">1847.6188E</div>
<div class="cell" style="left:444.0px;top:702.0px;width:64.0px;padding-left:4px">4929.1586N</div>
<div class="cell" style="left:508.0px;top:702.0px;width:45.0px;padding-left:3.7px">000.00</div>
<div class="cell" style="left:553.0px;top:702.0px;width:100.0px;padding-left:3.7px">3</div>
<div class="cell" style="left:653.0px;top:702.0px;width:47.6px;padding-left:5.5px">483.40</div>
<div class="cell" style="left:700.6px;top:702.0px;width:70.8px;padding-left:5.8px">1.27</div>
<div class="cell" style="left:771.4px;top:702.0px;width:85.6px;padding-left:3.5px">-0.12</div>
<div class="cell" style="left:857.0px;top:702.0px;width:45.0px;padding-left:3.4px">0</div>
<div class="cell" style="left:902.0px;top:702.0px;width:45.6px;padding-left:4px">0</div>
<div class="cell" style="left:947.6px;top:702.0px;width:12.4px;padding-left:3px">0</div>
<div class="row" style="top:719.4px;background:#fff"></div>
<div class="cell" style="left:11.0px;top:719.4px;width:59.0px;padding-left:2px">2014-06-08</div>
<div class="cell" style="left:70.0px;top:719.4px;width:70.5px;padding-left:3.5px;letter-spacing:0.5px">19:25:24.300</div>
<div class="cell" style="left:140.5px;top:719.4px;width:33.5px;padding-left:3.3px">0</div>
<div class="cell" style="left:174.0px;top:719.4px;width:33.5px;padding-left:2.8px">83</div>
<div class="cell" style="left:207.5px;top:719.4px;width:28.0px;padding-left:2.8px">0.00</div>
<div class="cell" style="left:235.5px;top:719.4px;width:28.0px;padding-left:2.8px">0.00</div>
<div class="cell" style="left:263.5px;top:719.4px;width:60.5px;padding-left:3px">2014-06-08</div>
<div class="cell" style="left:324.0px;top:719.4px;width:59.0px;padding-left:3.6px;letter-spacing:0.5px">17:29:58</div>
<div class="cell" style="left:383.0px;top:719.4px;width:61.0px;padding-left:3px">1847.6188E</div>
<div class="cell" style="left:444.0px;top:719.4px;width:64.0px;padding-left:4px">4929.1586N</div>
<div class="cell" style="left:508.0px;top:719.4px;width:45.0px;padding-left:3.7px">000.00</div>
<div class="cell" style="left:553.0px;top:719.4px;width:100.0px;padding-left:3.7px">3</div>
<div class="cell" style="left:653.0px;top:719.4px;width:47.6px;padding-left:5.5px">483.40</div>
<div class="cell" style="left:700.6px;top:719.4px;width:70.8px;padding-left:5.8px">1.26</div>
<div class="cell" style="left:771.4px;top:719.4px;width:85.6px;padding-left:6px">0.00</div>
<div class="cell" style="left:857.0px;top:719.4px;width:45.0px;padding-left:3.4px">0</div>
<div class="cell" style="left:902.0px;top:719.4px;width:45.6px;padding-left:4px">0</div>
<div class="cell" style="left:947.6px;top:719.4px;width:12.4px;padding-left:3px">0</div>
<div class="row" style="top:736.8px;background:#e9e9e9"></div>
<div class="cell" style="left:11.0px;top:736.8px;width:59.0px;padding-left:2px">2014-06-08</div>
<div class="cell" style="left:70.0px;top:736.8px;width:70.5px;padding-left:3.5px;letter-spacing:0.5px">19:25:24.810</div>
<div class="cell" style="left:140.5px;top:736.8px;width:33.5px;padding-left:3.3px">0</div>
<div class="cell" style="left:174.0px;top:736.8px;width:33.5px;padding-left:2.8px">80</div>
<div class="cell" style="left:207.5px;top:736.8px;width:28.0px;padding-left:2.8px">0.00</div>
<div class="cell" style="left:235.5px;top:736.8px;width:28.0px;padding-left:2.8px">0.00</div>
<div class="cell" style="left:263.5px;top:736.8px;width:60.5px;padding-left:3px">2014-06-08</div>
<div class="cell" style="left:324.0px;top:736.8px;width:59.0px;padding-left:3.6px;letter-spacing:0.5px">17:29:58</div>
<div class="cell" style="left:383.0px;top:736.8px;width:61.0px;padding-left:3px">1847.6188E</div>
<div class="cell" style="left:444.0px;top:736.8px;width:64.0px;padding-left:4px">4929.1588N</div>
<div class="cell" style="left:508.0px;top:736.8px;width:45.0px;padding-left:3.7px">000.00</div>
<div class="cell" style="left:553.0px;top:736.8px;width:100.0px;padding-left:3.7px">3</div>
<div class="cell" style="left:653.0px;top:736.8px;width:47.6px;padding-left:5.5px">483.40</div>
<div class="cell" style="left:700.6px;top:736.8px;width:70.8px;padding-left:5.8px">1.33</div>
<div class="cell" style="left:771.4px;top:736.8px;width:85.6px;padding-left:6px">0.09</div>
<div class="cell" style="left:857.0px;top:736.8px;width:45.0px;padding-left:3.4px">0</div>
<div class="cell" style="left:902.0px;top:736.8px;width:45.6px;padding-left:4px">0</div>
<div class="cell" style="left:947.6px;top:736.8px;width:12.4px;padding-left:3px">0</div>
<div class="row" style="top:754.2px;background:#fff"></div>
<div class="cell" style="left:11.0px;top:754.2px;width:59.0px;padding-left:2px">2014-06-08</div>
<div class="cell" style="left:70.0px;top:754.2px;width:70.5px;padding-left:3.5px;letter-spacing:0.5px">19:25:25.320</div>
<div class="cell" style="left:140.5px;top:754.2px;width:33.5px;padding-left:3.3px">0</div>
<div class="cell" style="left:174.0px;top:754.2px;width:33.5px;padding-left:2.8px">80</div>
<div class="cell" style="left:207.5px;top:754.2px;width:28.0px;padding-left:2.8px">0.00</div>
<div class="cell" style="left:235.5px;top:754.2px;width:28.0px;padding-left:2.8px">0.00</div>
<div class="cell" style="left:263.5px;top:754.2px;width:60.5px;padding-left:3px">2014-06-08</div>
<div class="cell" style="left:324.0px;top:754.2px;width:59.0px;padding-left:3.6px;letter-spacing:0.5px">17:29:58</div>
<div class="cell" style="left:383.0px;top:754.2px;width:61.0px;padding-left:3px">1847.6188E</div>
<div class="cell" style="left:444.0px;top:754.2px;width:64.0px;padding-left:4px">4929.1588N</div>
<div class="cell" style="left:508.0px;top:754.2px;width:45.0px;padding-left:3.7px">000.00</div>
<div class="cell" style="left:553.0px;top:754.2px;width:100.0px;padding-left:3.7px">1</div>
<div class="cell" style="left:653.0px;top:754.2px;width:47.6px;padding-left:5.5px">484.00</div>
<div class="cell" style="left:700.6px;top:754.2px;width:70.8px;padding-left:5.8px">1.31</div>
<div class="cell" style="left:771.4px;top:754.2px;width:85.6px;padding-left:6px">0.00</div>
<div class="cell" style="left:857.0px;top:754.2px;width:45.0px;padding-left:3.4px">0</div>
<div class="cell" style="left:902.0px;top:754.2px;width:45.6px;padding-left:4px">0</div>
<div class="cell" style="left:947.6px;top:754.2px;width:12.4px;padding-left:3px">0</div>
<div class="vl" style="left:69.5px"></div>
<div class="vl" style="left:140.0px"></div>
<div class="vl" style="left:173.5px"></div>
<div class="vl" style="left:207.0px"></div>
<div class="vl" style="left:235.0px"></div>
<div class="vl" style="left:263.0px"></div>
<div class="vl" style="left:323.5px"></div>
<div class="vl" style="left:382.5px"></div>
<div class="vl" style="left:443.5px"></div>
<div class="vl" style="left:507.5px"></div>
<div class="vl" style="left:552.5px"></div>
<div class="vl" style="left:652.5px"></div>
<div class="vl" style="left:700.1px"></div>
<div class="vl" style="left:770.9px"></div>
<div class="vl" style="left:856.5px"></div>
<div class="vl" style="left:901.5px"></div>
<div class="vl" style="left:947.1px"></div>
<div class="hl" style="top:631.4px"></div>
<div class="hl" style="top:648.8px"></div>
<div class="hl" style="top:666.2px"></div>
<div class="hl" style="top:683.6px"></div>
<div class="hl" style="top:701.0px"></div>
<div class="hl" style="top:718.4px"></div>
<div class="hl" style="top:735.8px"></div>
<div class="hl" style="top:753.2px"></div>
<div class="abs" id="vscroll"></div>
<div class="sbtn" style="left:962px;top:596px"></div>
<svg class="abs" style="left:962px;top:596px" width="14" height="15"><path d="M3.5 9 L7 5.5 L10.5 9" fill="none" stroke="#4d6185" stroke-width="1.8"/></svg>
<div class="abs" style="left:962px;top:671.5px;width:14px;height:6px;background:#c2d3f6;border-radius:1px"></div>
<div class="sbtn" style="left:962px;top:746px"></div>
<svg class="abs" style="left:962px;top:746px" width="14" height="15"><path d="M3.5 6 L7 9.5 L10.5 6" fill="none" stroke="#4d6185" stroke-width="1.8"/></svg>
<div class="abs" id="hscroll"></div>
<div class="abs" style="left:12px;top:763px;width:14px;height:5px;background:#b6c9f3"></div>
<div class="abs" style="left:944px;top:763px;width:14px;height:5px;background:#b6c9f3"></div>
<div class="abs" id="rightstrip"></div>
</body></html>
